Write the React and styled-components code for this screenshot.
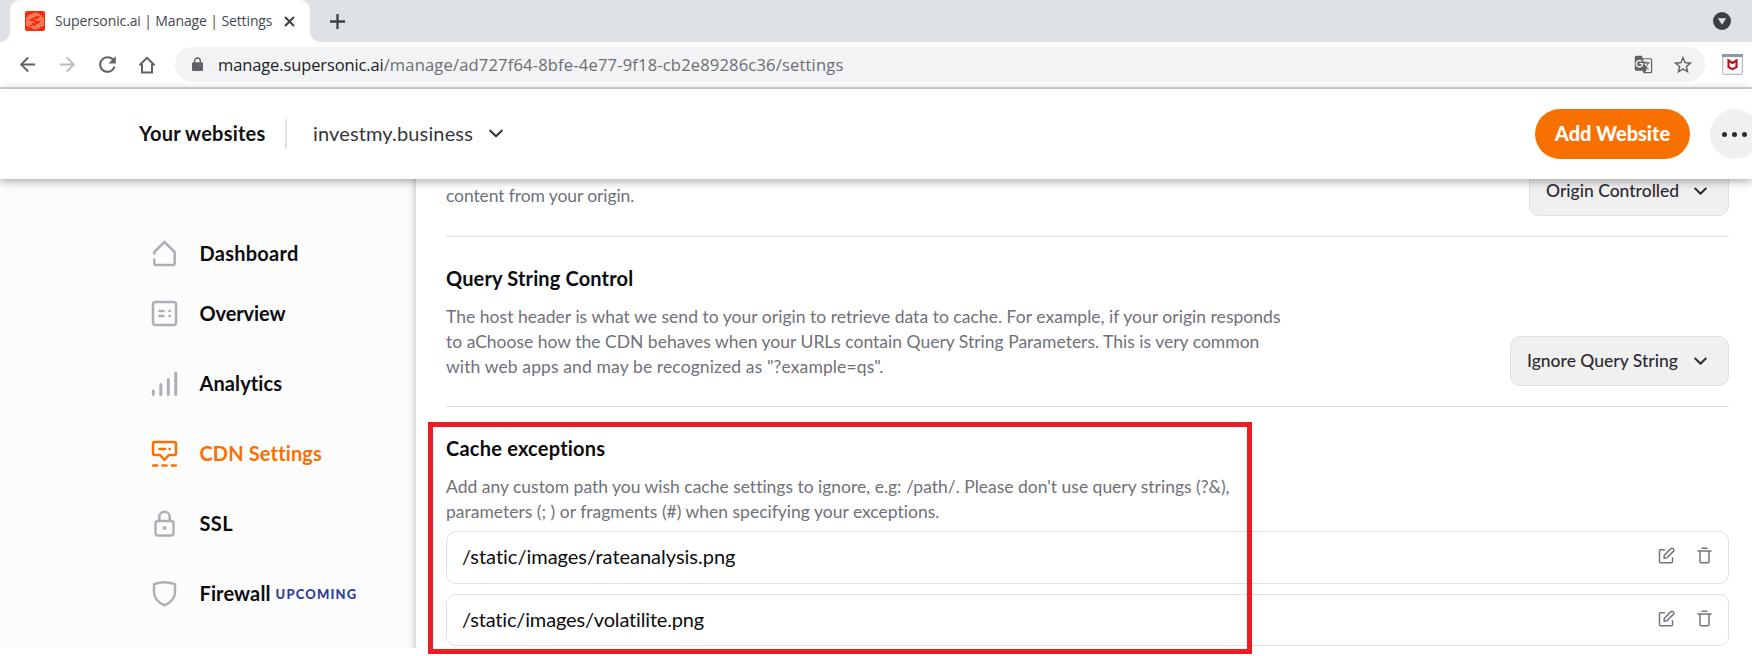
import React from "react";
import styled, { createGlobalStyle } from "styled-components";
import { MdArrowBack, MdArrowForward, MdRefresh, MdGTranslate, MdStarBorder } from "react-icons/md";

const GlobalStyle = createGlobalStyle`
  *, *::before, *::after { box-sizing: border-box; }
  body { margin: 0; overflow: hidden; background: #fff; font-family: Lato, "Liberation Sans", sans-serif; font-variant-ligatures: none; }
  svg { display: block; flex: none; }
  h2, p { margin: 0; }
`;

const Page = styled.div`
  width: 1752px;
  height: 656px;
  position: relative;
  overflow: hidden;
  display: flex;
  flex-direction: column;
`;

/* Browser chrome */
const TabBar = styled.div`
  display: flex;
  height: 42px;
  flex: none;
  background: #dee1e6;
  padding-left: 10px;
`;
const Tab = styled.div`
  display: flex;
  align-items: center;
  width: 300px;
  padding: 0 15px;
  background: #fff;
  border-radius: 10px 10px 0 0;
  position: relative;
  &::before, &::after {
    content: "";
    position: absolute;
    bottom: 0;
    width: 10px;
    height: 10px;
  }
  &::before { left: -10px; background: radial-gradient(circle at 0 0, #dee1e6 9.5px, #fff 10px); }
  &::after { right: -10px; background: radial-gradient(circle at 100% 0, #dee1e6 9.5px, #fff 10px); }
`;
const TabTitle = styled.span`
  font: 14px/20px "Open Sans", sans-serif;
  letter-spacing: -0.12px;
  color: #45494d;
  width: 229px;
  margin-left: 10px;
  white-space: nowrap;
`;
const NewTab = styled.div`
  display: flex;
  align-items: center;
  margin-left: 20px;
`;
const Account = styled.div`
  display: flex;
  align-items: center;
  margin-left: auto;
  padding-right: 21px;
`;
const Toolbar = styled.div`
  display: flex;
  align-items: center;
  flex: none;
  height: 47px;
  padding-left: 16px;
  border-bottom: 2px solid #d9dade;
  color: #5f6368;
`;
const NavButton = styled.div`
  display: flex;
  justify-content: center;
  width: 40px;
  margin-left: ${(p) => (p.$first ? -9 : 0)}px;
  color: ${(p) => (p.$disabled ? "#babcbe" : "#5f6368")};
`;
const Omnibox = styled.div`
  display: flex;
  align-items: center;
  width: 1530px;
  height: 35px;
  margin-left: 8px;
  border-radius: 18px;
  background: #f1f3f4;
  padding: 0 11px 0 17px;
`;
const Url = styled.div`
  display: flex;
  flex: 1;
  margin-left: 15px;
  font: 16.5px/24px "Open Sans", sans-serif;
`;
const Host = styled.span`
  color: #202124;
  letter-spacing: -0.12px;
`;
const Path = styled.span`
  color: #6a6e73;
  letter-spacing: 0.19px;
`;
const OmniIcons = styled.div`
  display: flex;
  align-items: center;
  gap: 19px;
`;
const Extension = styled.div`
  margin-left: 17px;
`;

/* Site header */
const Header = styled.header`
  display: flex;
  align-items: center;
  flex: none;
  height: 90px;
  padding-left: 139px;
  background: #fff;
  box-shadow: 0 2px 9px rgba(0, 0, 0, 0.36);
  position: relative;
  z-index: 1;
`;
const HeaderTitle = styled.span`
  width: 146px;
  margin-top: -2px;
  font-size: 20px;
  line-height: 30px;
  font-weight: 700;
  letter-spacing: 0.22px;
  color: #111;
`;
const SitePicker = styled.div`
  display: flex;
  align-items: center;
  height: 30px;
  padding-left: 26px;
  border-left: 2px solid #e2e2e4;
  color: #36363b;
  font-size: 20px;
  letter-spacing: 0.14px;
`;
const PickerName = styled.span`
  width: 175px;
  margin: -2px 1px 0 0;
`;
const AddButton = styled.button`
  width: 155px;
  height: 50px;
  margin-left: auto;
  border: 0;
  border-radius: 25px;
  background: #f87000;
  color: #fff;
  font: 900 20px/30px Lato, sans-serif;
  letter-spacing: -0.03px;
  white-space: nowrap;
  padding: 0 0 2px;
`;
const MoreButton = styled.div`
  display: flex;
  align-items: center;
  justify-content: center;
  flex: none;
  gap: 5px;
  width: 50px;
  height: 50px;
  margin: 0 -8px 0 20px;
  padding-right: 2px;
  border-radius: 50%;
  background: #f0f0f0;
`;
const Dot = styled.span`
  width: 5px;
  height: 5px;
  border-radius: 50%;
  background: #2b2b2f;
`;

/* Body */
const Body = styled.div`
  display: flex;
  align-items: flex-start;
`;
const Sidebar = styled.nav`
  display: flex;
  flex-direction: column;
  width: 416px;
  height: 469px;
  flex: none;
  padding: 50px 0 0 151px;
  background: #fcfcfc;
  box-shadow: inset -9px 0 9px -8px rgba(0, 0, 0, 0.22);
  overflow: hidden;
`;
const NavItem = styled.div`
  display: flex;
  align-items: center;
  flex: none;
  height: ${(p) => (p.$compact ? 50 : 70)}px;
  color: ${(p) => (p.$active ? "#f87000" : "#aeaeb6")};
`;
const NavIcon = styled.div`
  margin-top: -1px;
`;
const NavLabel = styled.span`
  margin: -2px 0 0 21.5px;
  font-size: 20px;
  line-height: 30px;
  font-weight: 700;
  letter-spacing: ${(p) => p.$track || 0}px;
  color: ${(p) => (p.$active ? "#f87000" : "#0c0c0e")};
`;
const Upcoming = styled.span`
  margin: -1px 0 0 5px;
  font-size: 13px;
  line-height: 30px;
  font-weight: 900;
  letter-spacing: 1.15px;
  color: #2f3e9e;
`;
const Content = styled.main`
  width: 1283px;
  margin-left: 30px;
`;
const Section = styled.section`
  display: flex;
  justify-content: space-between;
  height: ${(p) => p.$height}px;
  padding-top: ${(p) => p.$top}px;
  border-bottom: ${(p) => (p.$last ? "0" : "1px solid #dfdfe1")};
`;
const Heading = styled.h2`
  font-size: 20px;
  line-height: 30px;
  font-weight: 700;
  letter-spacing: ${(p) => p.$track || 0}px;
  color: #0c0c0e;
  margin-bottom: 11px;
`;
const Line = styled.p`
  font-size: 17.5px;
  line-height: 25px;
  letter-spacing: ${(p) => p.$track || 0}px;
  color: #707178;
  white-space: nowrap;
`;
const Select = styled.div`
  display: flex;
  align-items: center;
  justify-content: space-between;
  flex: none;
  width: ${(p) => p.$width}px;
  height: 50px;
  margin-top: ${(p) => p.$offset}px;
  padding: 0 21px 0 16px;
  border: 1px solid #e0e0e2;
  border-radius: 10px;
  background: #f0f0f0;
  color: #2b2b30;
  font-size: 17.5px;
  font-weight: 500;
  line-height: 25px;
`;
const SelectText = styled.span`
  margin-top: -2px;
  white-space: nowrap;
`;
const Exceptions = styled.div`
  display: flex;
  flex-direction: column;
  gap: 10px;
  margin-top: 7px;
`;
const ExceptionRow = styled.div`
  display: flex;
  align-items: center;
  height: ${(p) => p.$height}px;
  padding: 0 16px 0 15px;
  border: 1px solid #e0e0e2;
  border-radius: 10px;
`;
const ExceptionPath = styled.span`
  flex: 1;
  margin-top: -3px;
  font-size: 20px;
  line-height: 30px;
  letter-spacing: ${(p) => p.$track}px;
  color: #0c0c0e;
`;
const RowActions = styled.div`
  display: flex;
  gap: 22px;
  margin-top: -4px;
`;
const Highlight = styled.div`
  position: absolute;
  left: 428px;
  top: 422px;
  width: 824px;
  height: 232px;
  border: 5px solid #ed1c24;
  z-index: 2;
`;

const stroke = { fill: "none", stroke: "currentColor", strokeLinecap: "round", strokeLinejoin: "round" };

const Chevron = ({ w = 14 }) => (
  <svg width={w} height={w * 0.65} viewBox="0 0 14 9" {...stroke} strokeWidth="2.1">
    <path d="M1.3 1.6 7 7.2l5.7-5.6" />
  </svg>
);
const Favicon = () => (
  <svg width="20" height="20" viewBox="0 0 20 20">
    <rect width="20" height="20" rx="2" fill="#f72c05" />
    <g stroke="#ffb3a2" strokeWidth="1.1">
      <path d="M2 6v9M4 4v12M6 3v5M6 10v7M8 2v5M8 10v2M8 14v4M10 1.5V6M10 8v1M10 11.5v1M10 15v3.500M12 2v3M12 8v2M12 13v5M14 3v7M14 12v5M16 4v12M18 6v9" />
    </g>
    <path d="m15 5.500-8 3 6 3-8 3.500" fill="none" stroke="#f72c05" strokeWidth="1.2" />
  </svg>
);
const HomeIcon = () => (
  <svg width="18" height="18" viewBox="0 0 18 18" fill="none" stroke="currentColor" strokeWidth="2">
    <path d="M1.500 9.200 9 1.800l7.500 7.400M4 8v8.500h10V8" />
  </svg>
);
const LockIcon = () => (
  <svg width="11" height="15" viewBox="0 0 11 15">
    <path d="M2.700 6V3.800a2.800 2.800 0 0 1 5.600 0V6" fill="none" stroke="#5f6368" strokeWidth="1.400" />
    <rect y="5.200" width="11" height="8.800" rx="1.200" fill="#5f6368" />
  </svg>
);
const McAfee = () => (
  <svg width="21" height="21" viewBox="0 0 21 21">
    <rect x=".6" y=".6" width="19.800" height="19.800" rx="1.500" fill="#fafafa" stroke="#b9bcbf" strokeWidth="1.200" />
    <path d="M0 0h21v3H0z" fill="#879ea8" />
    <path d="M6.500 6.500v6.700l4 2 4-2V6.500l-4 2.500z" fill="none" stroke="#b5121b" strokeWidth="2.100" />
  </svg>
);
const NavDashboard = () => (
  <svg width="27" height="27" viewBox="0 0 27 27" {...stroke} strokeWidth="2.500">
    <path d="M3.300 13.700v-1.700L13.500 2l10.200 10v11.500a1.500 1.500 0 0 1-1.500 1.500H4.800a1.500 1.500 0 0 1-1.500-1.500v-4" />
  </svg>
);
const NavOverview = () => (
  <svg width="27" height="27" viewBox="0 0 27 27" {...stroke} strokeWidth="2.500">
    <rect x="2" y="2" width="23" height="23" rx="2.500" />
    <path d="M8.500 11h4M8.500 16h4M18.500 11h.4M18.500 16h.4" strokeWidth="2.600" />
  </svg>
);
const NavAnalytics = () => (
  <svg width="27" height="27" viewBox="0 0 27 27" {...stroke} strokeWidth="3">
    <path d="M2.300 21v3.500M9.800 14.500v10M17.300 9.500v15M24.700 3v21.500" />
  </svg>
);
const NavCdn = () => (
  <svg width="27" height="27" viewBox="0 0 27 27" {...stroke} strokeWidth="2.500">
    <path d="M4 2h19a2 2 0 0 1 2 2v9a2 2 0 0 1-2 2h-5l-4.500 5L9 15H4a2 2 0 0 1-2-2V4a2 2 0 0 1 2-2zM8.500 9h5.500M18.500 9h.3M2.200 25.500h4M11.500 25.500h4M20.800 25.500h4" />
  </svg>
);
const NavSsl = () => (
  <svg width="27" height="27" viewBox="0 0 27 27" {...stroke} strokeWidth="2.500">
    <rect x="4.500" y="11" width="18" height="14.500" rx="2.500" />
    <path d="M8.300 11V7a5.200 5.200 0 0 1 10.400 0v4" />
    <circle cx="13.500" cy="18" r="2" fill="currentColor" stroke="none" />
  </svg>
);
const NavFirewall = () => (
  <svg width="27" height="27" viewBox="0 0 27 27" {...stroke} strokeWidth="2.400">
    <path d="M3 4.200Q13.500.4 24 4.200v8c0 6.200-4.500 10.300-10.500 13.200C7.500 22.500 3 18.400 3 12.200z" />
  </svg>
);
const EditIcon = () => (
  <svg width="17" height="17" viewBox="0 0 17 17" {...stroke} stroke="#74757f" strokeWidth="1.500">
    <path d="M6.500 2.700H2.500a1 1 0 0 0-1 1v11a1 1 0 0 0 1 1h11a1 1 0 0 0 1-1v-4" />
    <path d="m6.300 8.200 6.300-6.300a1.600 1.600 0 0 1 2.700 2.500L9 10.700l-3 .5z" />
  </svg>
);
const TrashIcon = () => (
  <svg width="15" height="17" viewBox="0 0 15 17" {...stroke} stroke="#74757f" strokeWidth="1.500">
    <path d="M5 1.200h5M1 4h13M3 4v10.700a1 1 0 0 0 1 1h7a1 1 0 0 0 1-1V4" />
  </svg>
);

const navItems = [
  { label: "Dashboard", Icon: NavDashboard, compact: true, track: 0.26 },
  { label: "Overview", Icon: NavOverview, track: -0.1 },
  { label: "Analytics", Icon: NavAnalytics, track: 0.1 },
  { label: "CDN Settings", Icon: NavCdn, active: true, track: 0.14 },
  { label: "SSL", Icon: NavSsl, track: 0.4 },
  { label: "Firewall", Icon: NavFirewall, upcoming: true, track: 0.12 },
];
const exceptions = [
  { path: "/static/images/rateanalysis.png", height: 53, track: -0.01 },
  { path: "/static/images/volatilite.png", height: 52, track: -0.16 },
];

export default function App() {
  return (
    <Page>
      <GlobalStyle />
      <TabBar>
        <Tab>
          <Favicon />
          <TabTitle>Supersonic.ai | Manage | Settings</TabTitle>
          <svg width="11" height="11" viewBox="0 0 11 11" stroke="#3c4043" strokeWidth="2.100">
            <path d="m1 1 9 9M10 1l-9 9" />
          </svg>
        </Tab>
        <NewTab>
          <svg width="15" height="15" viewBox="0 0 15 15" stroke="#3c4043" strokeWidth="2.300">
            <path d="M7.500 0v15M0 7.500h15" />
          </svg>
        </NewTab>
        <Account>
          <svg width="18" height="18" viewBox="0 0 18 18">
            <circle cx="9" cy="9" r="9" fill="#3c4043" />
            <path d="M4.800 6.300h8.400L9 12.800z" fill="#dee1e6" />
          </svg>
        </Account>
      </TabBar>
      <Toolbar>
        <NavButton $first><MdArrowBack size={23} /></NavButton>
        <NavButton $disabled><MdArrowForward size={23} /></NavButton>
        <NavButton><MdRefresh size={25} /></NavButton>
        <NavButton><HomeIcon /></NavButton>
        <Omnibox>
          <LockIcon />
          <Url>
            <Host>manage.supersonic.ai</Host>
            <Path>/manage/ad727f64-8bfe-4e77-9f18-cb2e89286c36/settings</Path>
          </Url>
          <OmniIcons>
            <MdGTranslate size={19} />
            <MdStarBorder size={22} />
          </OmniIcons>
        </Omnibox>
        <Extension><McAfee /></Extension>
      </Toolbar>
      <Header>
        <HeaderTitle>Your websites</HeaderTitle>
        <SitePicker>
          <PickerName>investmy.business</PickerName>
          <Chevron />
        </SitePicker>
        <AddButton>Add Website</AddButton>
        <MoreButton><Dot /><Dot /><Dot /></MoreButton>
      </Header>
      <Body>
        <Sidebar>
          {navItems.map(({ label, Icon, compact, active, upcoming, track }) => (
            <NavItem key={label} $compact={compact} $active={active}>
              <NavIcon><Icon /></NavIcon>
              <NavLabel $active={active} $track={track}>{label}</NavLabel>
              {upcoming && <Upcoming>UPCOMING</Upcoming>}
            </NavItem>
          ))}
        </Sidebar>
        <Content>
          <Section $height={58} $top={4}>
            <Line $track={-0.1}>content from your origin.</Line>
            <Select $width={200} $offset={-17}>
              <SelectText>Origin Controlled</SelectText>
              <Chevron w={13} />
            </Select>
          </Section>
          <Section $height={170} $top={26}>
            <div>
              <Heading $track={0.15}>Query String Control</Heading>
              <Line $track={0.03}>The host header is what we send to your origin to retrieve data to cache. For example, if your origin responds</Line>
              <Line $track={0.005}>to aChoose how the CDN behaves when your URLs contain Query String Parameters. This is very common</Line>
              <Line $track={0.12}>with web apps and may be recognized as "?example=qs".</Line>
            </div>
            <Select $width={219} $offset={73}>
              <SelectText>Ignore Query String</SelectText>
              <Chevron w={13} />
            </Select>
          </Section>
          <Section $height={117} $top={26} $last>
            <div>
              <Heading $track={0.22}>Cache exceptions</Heading>
              <Line $track={-0.01}>Add any custom path you wish cache settings to ignore, e.g: /path/. Please don't use query strings (?&amp;),</Line>
              <Line>parameters (; ) or fragments (#) when specifying your exceptions.</Line>
            </div>
          </Section>
          <Exceptions>
            {exceptions.map(({ path, height, track }) => (
              <ExceptionRow key={path} $height={height}>
                <ExceptionPath $track={track}>{path}</ExceptionPath>
                <RowActions><EditIcon /><TrashIcon /></RowActions>
              </ExceptionRow>
            ))}
          </Exceptions>
        </Content>
      </Body>
      <Highlight />
    </Page>
  );
}
